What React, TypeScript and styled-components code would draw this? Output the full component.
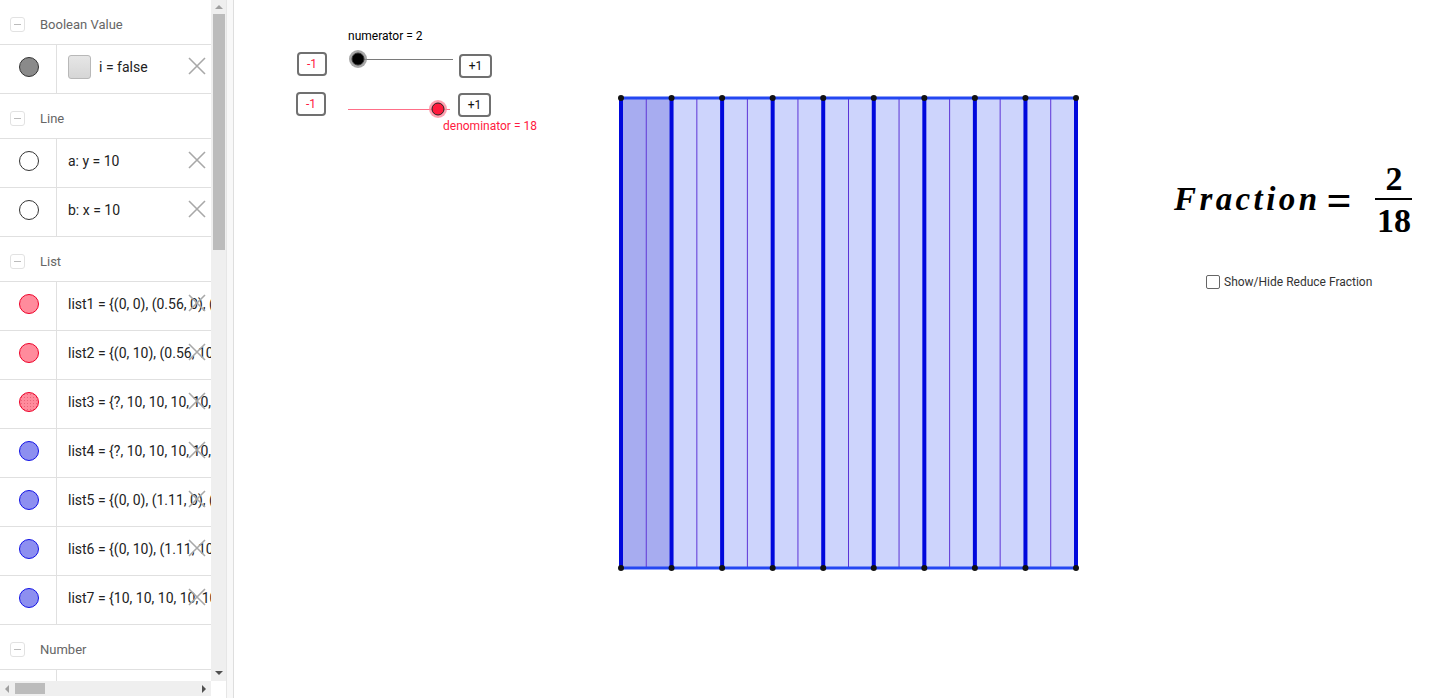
import React from "react";
import styled, { createGlobalStyle } from "styled-components";

const GlobalStyle = createGlobalStyle`
  html, body { margin: 0; padding: 0; overflow: hidden; background: #fff; }
  body { font-family: Roboto, "Liberation Sans", Arial, sans-serif; }
  * { box-sizing: border-box; }
`;

const Page = styled.div`
  display: flex;
  width: 1440px;
  height: 698px;
  overflow: hidden;
`;

const AlgebraPanel = styled.div`
  width: 226px;
  height: 698px;
  display: flex;
  flex-direction: column;
  flex-shrink: 0;
`;

const PanelTop = styled.div`
  display: flex;
  height: 681px;
`;

const ItemList = styled.div`
  width: 211px;
  height: 681px;
  overflow: hidden;
  display: flex;
  flex-direction: column;
`;

const Header = styled.div`
  height: 45px;
  flex-shrink: 0;
  display: flex;
  align-items: center;
  padding-left: 10px;
  padding-top: 4px;
  border-bottom: 1px solid #e0e0e0;
  color: #666;
  font-size: 13px;
`;

const Collapse = styled.span`
  width: 15px;
  height: 15px;
  border: 1px solid #e2e2e2;
  border-radius: 3px;
  display: flex;
  align-items: center;
  justify-content: center;
  margin-right: 15px;
  &::after {
    content: "";
    width: 7px;
    height: 1px;
    background: #bbb;
  }
`;

const Row = styled.div<{ $partial?: boolean }>`
  height: ${(p) => (p.$partial ? "20px" : "49px")};
  flex-shrink: 0;
  display: flex;
  border-bottom: ${(p) => (p.$partial ? "none" : "1px solid #e0e0e0")};
`;

const MarbleCell = styled.div`
  width: 57px;
  flex-shrink: 0;
  border-right: 1px solid #e0e0e0;
  display: flex;
  align-items: center;
  justify-content: center;
  padding-left: 1px;
  padding-bottom: 4px;
`;

type MarbleKind = "gray" | "empty" | "red" | "redDots" | "blue";
const marbleFill: Record<MarbleKind, string> = {
  gray: "#8a8a8a",
  empty: "#ffffff",
  red: "#ff8b9c",
  redDots: "#ff8b9c",
  blue: "#8d8ff0",
};
const marbleBorder: Record<MarbleKind, string> = {
  gray: "#333",
  empty: "#333",
  red: "#ee0028",
  redDots: "#ee0028",
  blue: "#1212e6",
};

const Marble = styled.span<{ $kind: MarbleKind }>`
  width: 20px;
  height: 20px;
  border-radius: 50%;
  background: ${(p) => marbleFill[p.$kind]};
  ${(p) =>
    p.$kind === "redDots"
      ? "background-image: radial-gradient(#e8667a 0.6px, transparent 0.9px); background-size: 3px 3px;"
      : ""}
  border: 1px solid ${(p) => marbleBorder[p.$kind]};
`;

const ItemContent = styled.div`
  flex: 1;
  position: relative;
  display: flex;
  align-items: center;
  padding-left: 11px;
  padding-bottom: 5px;
  white-space: nowrap;
  overflow: hidden;
  font-size: 14px;
  color: #222;
`;

const BoolBox = styled.span`
  width: 23px;
  height: 24px;
  border: 1px solid #b8b8b8;
  border-radius: 3px;
  background: linear-gradient(#e6e6e6, #d6d6d6);
  margin-right: 8px;
  flex-shrink: 0;
`;

const DeleteBtn = styled.span`
  position: absolute;
  right: 5px;
  top: 50%;
  margin-top: -12px;
  width: 18px;
  height: 18px;
  display: flex;
`;

const VScroll = styled.div`
  width: 15px;
  height: 681px;
  background: #efefef;
  position: relative;
  display: flex;
  flex-direction: column;
  align-items: center;
`;

const Arrow = styled.span<{ $dir: "up" | "down" | "left" | "right" }>`
  width: 0;
  height: 0;
  ${(p) =>
    p.$dir === "up"
      ? "border-left: 4px solid transparent; border-right: 4px solid transparent; border-bottom: 4px solid #a0a0a0;"
      : p.$dir === "down"
      ? "border-left: 4px solid transparent; border-right: 4px solid transparent; border-top: 4px solid #505050;"
      : p.$dir === "left"
      ? "border-top: 4px solid transparent; border-bottom: 4px solid transparent; border-right: 4px solid #a0a0a0;"
      : "border-top: 4px solid transparent; border-bottom: 4px solid transparent; border-left: 4px solid #505050;"}
`;

const VThumb = styled.div`
  width: 12px;
  height: 236px;
  background: #bcbcbc;
  margin-top: 5px;
`;

const Spacer = styled.div<{ $size?: number }>`
  flex: ${(p) => (p.$size !== undefined ? `0 0 ${p.$size}px` : "1")};
`;

const HScrollRow = styled.div`
  display: flex;
  height: 15px;
`;

const HScroll = styled.div`
  width: 211px;
  height: 15px;
  background: #efefef;
  display: flex;
  align-items: center;
  padding: 0 5px;
`;

const HThumb = styled.div`
  width: 30px;
  height: 11px;
  background: #bcbcbc;
  margin-left: 6px;
`;

const Divider = styled.div`
  width: 8px;
  height: 698px;
  flex-shrink: 0;
  background: #f8f8f8;
  border-left: 1px solid #e6e6e6;
  border-right: 1px solid #dedede;
`;

const Graphics = styled.div`
  position: relative;
  flex: 1;
  height: 698px;
  background: #fff;
`;

const GX = 234;

const Canvas = styled.svg`
  position: absolute;
  left: 0;
  top: 0;
  pointer-events: none;
`;

const SliderLabel = styled.span<{ $x: number; $y: number; $color: string }>`
  position: absolute;
  left: ${(p) => p.$x - GX}px;
  top: ${(p) => p.$y}px;
  font-size: 12px;
  color: ${(p) => p.$color};
  white-space: nowrap;
  line-height: 14px;
`;

const StepButton = styled.button<{ $x: number; $y: number; $w: number; $red?: boolean }>`
  position: absolute;
  left: ${(p) => p.$x - GX}px;
  top: ${(p) => p.$y}px;
  width: ${(p) => p.$w}px;
  height: 24px;
  border: 2px solid #707070;
  border-radius: 4px;
  background: #fff;
  color: ${(p) => (p.$red ? "#ff1a40" : "#111")};
  font-family: Roboto, "Liberation Sans", Arial, sans-serif;
  font-size: 12px;
  padding: 0;
  display: flex;
  align-items: center;
  justify-content: center;
`;

const FractionBox = styled.div`
  position: absolute;
  left: ${1174 - GX}px;
  top: 162px;
  display: flex;
  align-items: center;
  font-family: "Liberation Serif", "Times New Roman", serif;
  font-weight: bold;
  color: #000;
`;

const MathWord = styled.span`
  font-style: italic;
  font-size: 33px;
  letter-spacing: 3.4px;
`;

const Equals = styled.span`
  font-size: 44px;
  line-height: 40px;
  margin-left: 6px;
  margin-right: 24px;
  margin-top: 2px;
`;

const Frac = styled.span`
  display: inline-flex;
  flex-direction: column;
  align-items: center;
  font-size: 34px;
  line-height: 33px;
`;

const FracBar = styled.span`
  width: 37px;
  height: 2px;
  background: #000;
  margin: 3px 0 4px;
`;

const CheckRow = styled.label`
  position: absolute;
  left: ${1206 - GX}px;
  top: 275px;
  display: flex;
  align-items: center;
  font-size: 12px;
  color: #333;
`;

const CheckBox = styled.span`
  width: 14px;
  height: 14px;
  border: 1px solid #666;
  border-radius: 2px;
  margin-right: 4px;
  background: #fff;
`;

const XIcon = () => (
  <svg width="18" height="18" viewBox="0 0 18 18">
    <path d="M1 1 L17 17 M17 1 L1 17" stroke="#a8a8a8" strokeWidth="1.6" fill="none" />
  </svg>
);

type Item = { kind: MarbleKind; text: string; bool?: boolean };
type Group = { title: string; items: Item[] };

const groups: Group[] = [
  { title: "Boolean Value", items: [{ kind: "gray", text: "i = false", bool: true }] },
  {
    title: "Line",
    items: [
      { kind: "empty", text: "a: y = 10" },
      { kind: "empty", text: "b: x = 10" },
    ],
  },
  {
    title: "List",
    items: [
      { kind: "red", text: "list1 = {(0, 0), (0.56, 0), (1.11, 0)}" },
      { kind: "red", text: "list2 = {(0, 10), (0.56, 10), (1.11, 10)}" },
      { kind: "redDots", text: "list3 = {?, 10, 10, 10, 10, 10}" },
      { kind: "blue", text: "list4 = {?, 10, 10, 10, 10, 10}" },
      { kind: "blue", text: "list5 = {(0, 0), (1.11, 0), (2.22, 0)}" },
      { kind: "blue", text: "list6 = {(0, 10), (1.11, 10), (2.22, 10)}" },
      { kind: "blue", text: "list7 = {10, 10, 10, 10, 10, 10}" },
    ],
  },
];

const Drawing = () => {
  const x0 = 621;
  const x1 = 1076;
  const y0 = 98;
  const y1 = 568;
  const n = 18;
  const w = (x1 - x0) / n;
  const cols = Array.from({ length: n }, (_, i) => i);
  const thick = Array.from({ length: n / 2 + 1 }, (_, k) => x0 + 2 * k * w);
  const thin = Array.from({ length: n / 2 }, (_, k) => x0 + (2 * k + 1) * w);
  return (
    <Canvas width={1206} height={698} viewBox={`${GX} 0 1206 698`}>
      {cols.map((i) => (
        <rect
          key={i}
          x={x0 + i * w}
          y={y0}
          width={w}
          height={y1 - y0}
          fill={i < 2 ? "#a7acf0" : "#cdd4fc"}
        />
      ))}
      {thin.map((x, i) => (
        <line key={"t" + i} x1={x} y1={y0} x2={x} y2={y1} stroke="#5b33d6" strokeWidth={1} />
      ))}
      <line x1={x0} y1={y0} x2={x1} y2={y0} stroke="#2447f2" strokeWidth={3} />
      <line x1={x0} y1={y1} x2={x1} y2={y1} stroke="#2447f2" strokeWidth={3} />
      {thick.map((x, i) => (
        <line key={"k" + i} x1={x} y1={y0} x2={x} y2={y1} stroke="#0008dc" strokeWidth={4} />
      ))}
      {thick.map((x, i) => (
        <g key={"p" + i}>
          <circle cx={x} cy={y0} r={3} fill="#111" />
          <circle cx={x} cy={y1} r={3} fill="#111" />
        </g>
      ))}
      {/* numerator slider */}
      <line x1={358} y1={59.5} x2={453} y2={59.5} stroke="#7a7a7a" strokeWidth={1} />
      <circle cx={358} cy={59} r={9} fill="#8a8a8a" opacity={0.75} />
      <circle cx={358} cy={59} r={6} fill="#000" stroke="#333" strokeWidth={1} />
      {/* denominator slider */}
      <rect x={348} y={109} width={102} height={1} fill="#ff6f88" shapeRendering="crispEdges" />
      <circle cx={438} cy={109} r={9} fill="#ff8a9c" opacity={0.8} />
      <circle cx={438} cy={109} r={6} fill="#ff1a3c" stroke="#222" strokeWidth={1} />
    </Canvas>
  );
};

export default function App() {
  return (
    <>
      <GlobalStyle />
      <Page>
        <AlgebraPanel>
          <PanelTop>
            <ItemList>
              {groups.map((g) => (
                <React.Fragment key={g.title}>
                  <Header>
                    <Collapse />
                    {g.title}
                  </Header>
                  {g.items.map((it) => (
                    <Row key={it.text}>
                      <MarbleCell>
                        <Marble $kind={it.kind} />
                      </MarbleCell>
                      <ItemContent>
                        {it.bool && <BoolBox />}
                        {it.text}
                        <DeleteBtn>
                          <XIcon />
                        </DeleteBtn>
                      </ItemContent>
                    </Row>
                  ))}
                </React.Fragment>
              ))}
              <Header>
                <Collapse />
                Number
              </Header>
              <Row $partial>
                <MarbleCell />
                <ItemContent />
              </Row>
            </ItemList>
            <VScroll>
              <Spacer $size={5} />
              <Arrow $dir="up" />
              <VThumb />
              <Spacer />
              <Arrow $dir="down" />
              <Spacer $size={6} />
            </VScroll>
          </PanelTop>
          <HScrollRow>
            <HScroll>
              <Arrow $dir="left" />
              <HThumb />
              <Spacer />
              <Arrow $dir="right" />
            </HScroll>
          </HScrollRow>
        </AlgebraPanel>
        <Divider />
        <Graphics>
          <Drawing />
          <SliderLabel $x={348} $y={29} $color="#000">
            numerator = 2
          </SliderLabel>
          <StepButton $x={297} $y={52} $w={30} $red>
            -1
          </StepButton>
          <StepButton $x={459} $y={54} $w={33}>
            +1
          </StepButton>
          <StepButton $x={296} $y={92} $w={30} $red>
            -1
          </StepButton>
          <StepButton $x={458} $y={93} $w={33}>
            +1
          </StepButton>
          <SliderLabel $x={443} $y={119} $color="#ff1a40">
            denominator = 18
          </SliderLabel>
          <FractionBox>
            <MathWord>Fraction</MathWord>
            <Equals>=</Equals>
            <Frac>
              <span>2</span>
              <FracBar />
              <span>18</span>
            </Frac>
          </FractionBox>
          <CheckRow>
            <CheckBox />
            Show/Hide Reduce Fraction
          </CheckRow>
        </Graphics>
      </Page>
    </>
  );
}
